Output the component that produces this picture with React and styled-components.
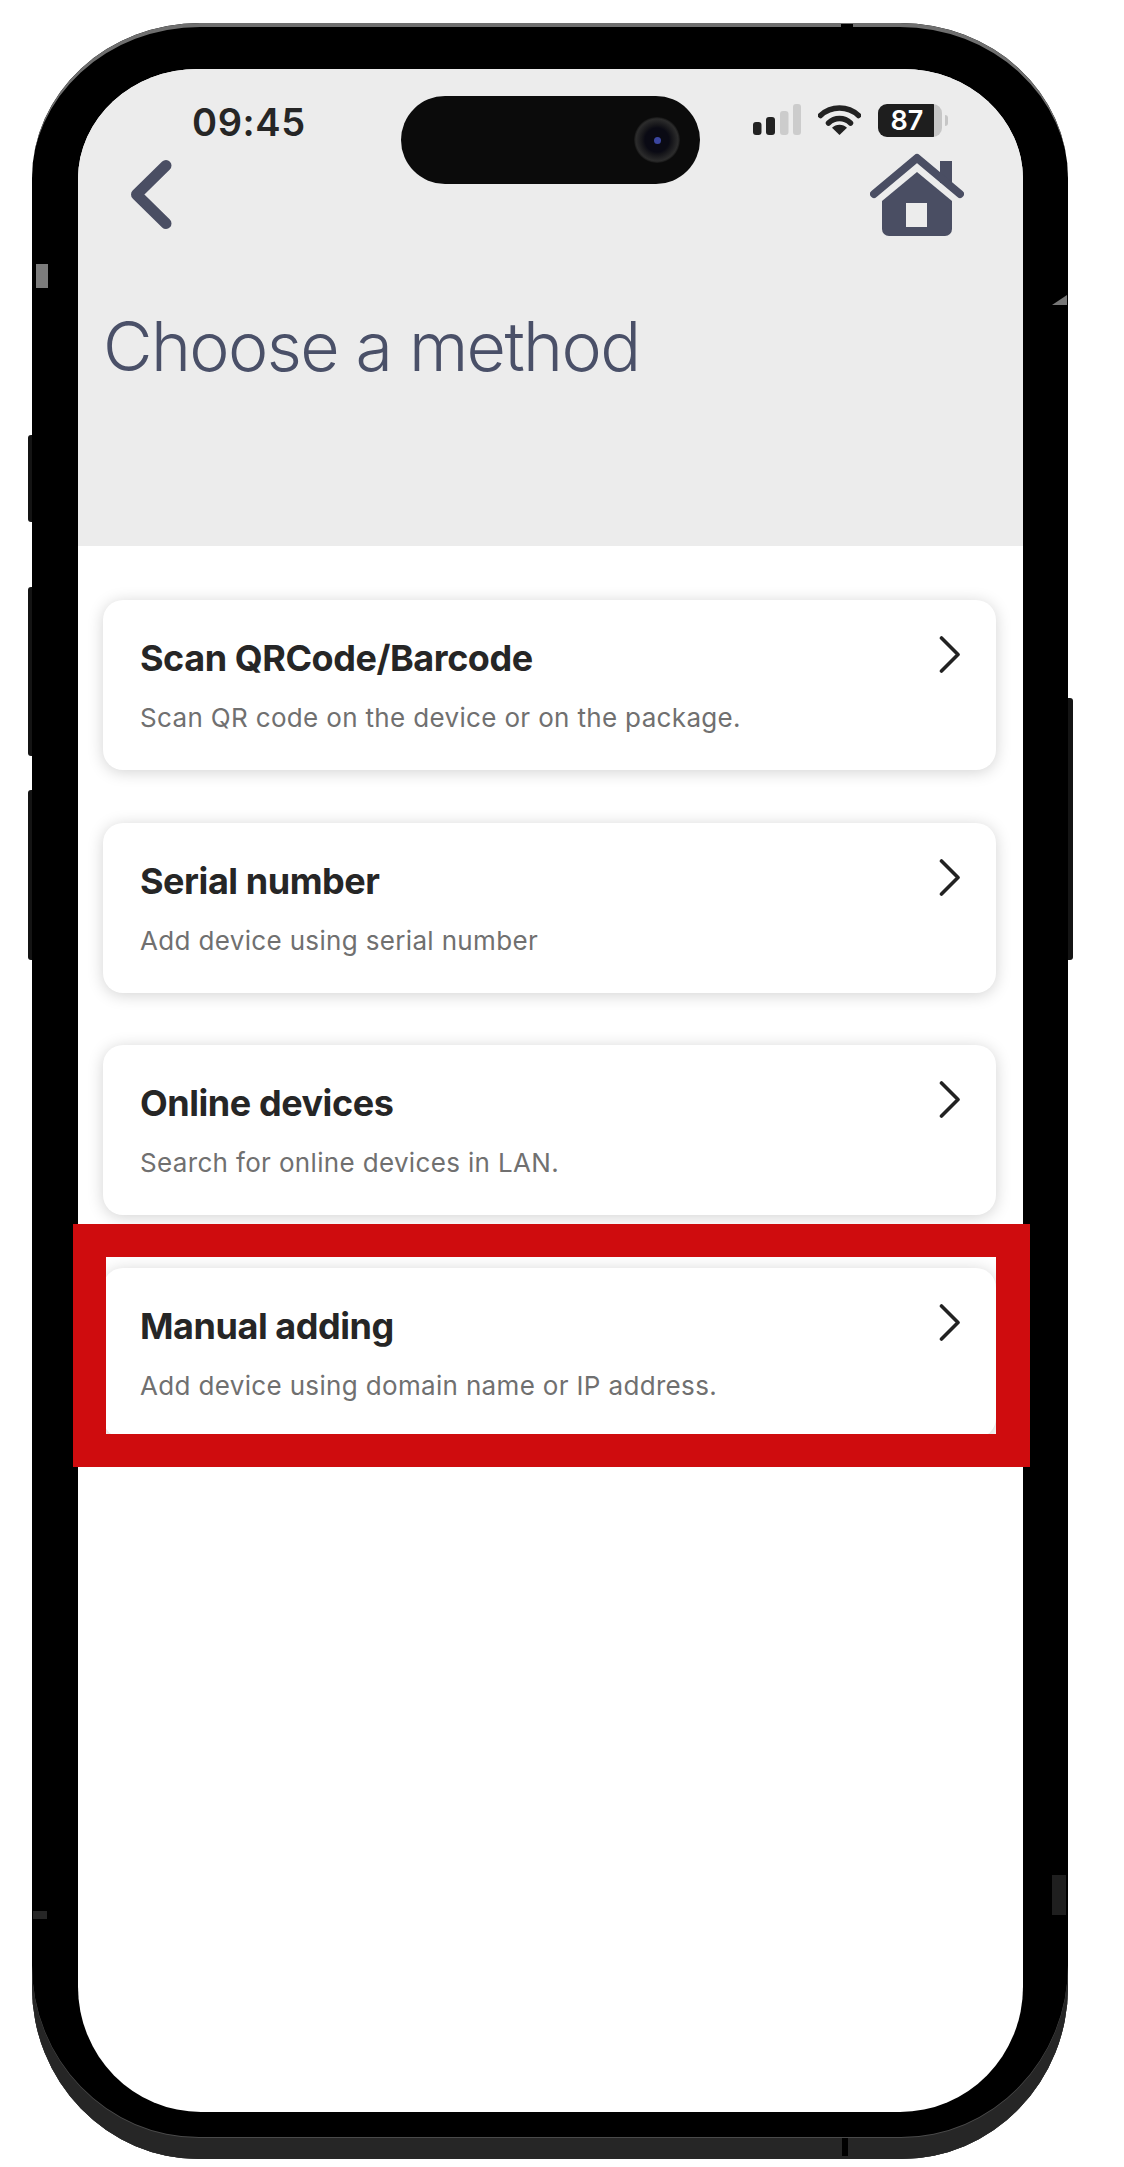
import React from 'react';
import styled, { createGlobalStyle } from 'styled-components';

const GlobalStyle = createGlobalStyle`
  html, body {
    margin: 0;
    background: #fff;
  }
  * {
    box-sizing: border-box;
  }
`;

const Page = styled.div`
  display: flex;
  align-items: flex-start;
  width: 1124px;
  height: 2167px;
  padding: 23px 0 0 28px;
  overflow: hidden;
  background: #fff;
  font-family: Inter, "Liberation Sans", sans-serif;
`;

const Rail = styled.div`
  display: flex;
  flex-direction: column;
  flex: none;
  width: ${(p) => p.$width}px;
  padding-top: ${(p) => p.$top}px;
`;

const SideButton = styled.div`
  height: ${(p) => p.$height}px;
  margin-top: ${(p) => p.$gap || 0}px;
  background: #141414;
  border-radius: ${(p) => (p.$right ? '0 3px 3px 0' : '3px 0 0 3px')};
`;

const Phone = styled.div`
  position: relative;
  flex: none;
  width: 1036px;
  height: 2136px;
  padding: 46px 45px 47px 46px;
  background: #000;
  border-radius: 168px 168px 167px 167px / 155px 155px 172px 172px;
  box-shadow: inset 0 5px 0 -1px #6f6f6f, inset 0 -21px 0 #262626, inset 0 -22px 0 #4a4a4a;
`;

const Band = styled.div`
  position: absolute;
  left: ${(p) => p.$x}px;
  top: ${(p) => p.$y}px;
  width: ${(p) => p.$w}px;
  height: ${(p) => p.$h}px;
  background: ${(p) => p.$color};
  clip-path: ${(p) => p.$clip || 'none'};
`;

const Screen = styled.div`
  width: 945px;
  height: 2043px;
  overflow: hidden;
  background: #fff;
  border-radius: 120px 120px 123px 123px / 110px 110px 125px 125px;
`;

const Header = styled.header`
  position: relative;
  height: 477px;
  background: #ececec;
`;

const StatusBar = styled.div`
  display: flex;
  align-items: flex-start;
  justify-content: space-between;
  height: 84px;
  padding: 33px 81px 0 114px;
`;

const Time = styled.span`
  font-size: 38px;
  font-weight: 600;
  line-height: 40px;
  letter-spacing: 0.6px;
  color: #262626;
`;

const Island = styled.div`
  position: absolute;
  left: 323px;
  top: 27px;
  display: flex;
  align-items: center;
  justify-content: flex-end;
  width: 299px;
  height: 88px;
  padding-right: 20px;
  background: #0b0b0b;
  border-radius: 44px;
`;

const Camera = styled.div`
  display: flex;
  align-items: center;
  justify-content: center;
  width: 46px;
  height: 46px;
  background: radial-gradient(circle, #0a0a14 0 12px, #16161a 15px, #2c2c2c 21px, #141414 23px);
  border-radius: 50%;
  &::after {
    content: '';
    width: 7px;
    height: 7px;
    background: #3b46a0;
    border-radius: 50%;
  }
`;

const StatusIcons = styled.div`
  display: flex;
  align-items: flex-start;
  gap: 17px;
  margin-top: 2px;
`;

const Battery = styled.div`
  position: relative;
  display: flex;
  align-items: center;
  justify-content: center;
  width: 64px;
  height: 33px;
  padding-right: 6px;
  font-size: 27px;
  font-weight: 600;
  color: #fff;
  background: linear-gradient(90deg, #1e1e1e ${(p) => p.$level}%, #c6c6c6 ${(p) => p.$level}%);
  border-radius: 9px;
  &::after {
    content: '';
    position: absolute;
    right: -6px;
    top: 11px;
    width: 3px;
    height: 11px;
    background: #c6c6c6;
    border-radius: 0 3px 3px 0;
  }
`;

const NavRow = styled.div`
  display: flex;
  align-items: flex-start;
  justify-content: space-between;
  height: 83px;
  padding: 0 59px 0 53px;
`;

const BackIcon = styled.svg`
  width: 41px;
  height: 69px;
  margin-top: 7px;
`;

const HomeIcon = styled.svg`
  width: 94px;
  height: 83px;
`;

const Title = styled.h1`
  margin: 69px 0 0 25px;
  font-size: 68px;
  font-weight: 300;
  line-height: 82px;
  letter-spacing: -1.6px;
  color: #4a5068;
`;

const CardList = styled.div`
  display: flex;
  flex-direction: column;
  gap: 52.6px;
  padding: 54px 27px 0 25px;
`;

const Card = styled.div`
  display: flex;
  align-items: flex-start;
  justify-content: space-between;
  height: 170px;
  padding: 36px 35px 0 37px;
  background: #fff;
  border-radius: 20px;
  box-shadow: 0 2px 16px rgba(0, 0, 0, 0.18);
`;

const CardText = styled.div`
  display: flex;
  flex-direction: column;
  gap: 22px;
`;

const CardTitle = styled.div`
  font-size: 36px;
  font-weight: 700;
  line-height: 44px;
  letter-spacing: -0.45px;
  color: #262626;
`;

const CardDesc = styled.div`
  font-size: 26px;
  font-weight: 400;
  line-height: 32px;
  letter-spacing: 0.34px;
  color: #707070;
`;

const Chevron = styled.svg`
  flex: none;
  width: 22px;
  height: 37px;
`;

const Highlight = styled.div`
  position: absolute;
  left: 41px;
  top: 1201px;
  width: 957px;
  height: 243px;
  border: 33px solid #cf0c0e;
  border-right-width: 34px;
`;

const methods = [
  { title: 'Scan QRCode/Barcode', desc: 'Scan QR code on the device or on the package.' },
  { title: 'Serial number', desc: 'Add device using serial number' },
  { title: 'Online devices', desc: 'Search for online devices in LAN.' },
  { title: 'Manual adding', desc: 'Add device using domain name or IP address.' },
];

const SignalIcon = () => (
  <svg width="48" height="31" viewBox="0 0 48 31">
    <rect x="0" y="18" width="8.5" height="13" rx="3" fill="#222" />
    <rect x="13" y="13" width="9" height="18" rx="3" fill="#222" />
    <rect x="27" y="7" width="8.5" height="24" rx="3" fill="#ccc" />
    <rect x="40" y="0" width="8" height="31" rx="3" fill="#ccc" />
  </svg>
);

const WifiIcon = () => (
  <svg width="43" height="31" viewBox="0 0 43 31">
    <path d="M2.5 11.5A28 28 0 0 1 40.5 11.5" fill="none" stroke="#222" strokeWidth="5.5" strokeLinecap="round" />
    <path d="M10.5 19A16 16 0 0 1 32.5 19" fill="none" stroke="#222" strokeWidth="5.5" strokeLinecap="round" />
    <path d="M21.5 31L14 23.8A10.5 10.5 0 0 1 29 23.8Z" fill="#222" />
  </svg>
);

export default function App() {
  return (
    <Page>
      <GlobalStyle />
      <Rail $width={4} $top={412}>
        <SideButton $height={87} />
        <SideButton $height={169} $gap={65} />
        <SideButton $height={170} $gap={34} />
      </Rail>
      <Phone>
        <Band $x={4} $y={241} $w={12} $h={24} $color="#7c7c7c" />
        <Band $x={809} $y={1} $w={12} $h={15} $color="#000" />
        <Band $x={810} $y={2115} $w={6} $h={18} $color="#000" />
        <Band $x={1020} $y={272} $w={15} $h={10} $color="#777" $clip="polygon(100% 0, 100% 100%, 0 100%)" />
        <Band $x={1} $y={1888} $w={14} $h={8} $color="#262626" />
        <Band $x={1020} $y={1852} $w={14} $h={40} $color="#1f1f1f" />
        <Screen>
          <Header>
            <StatusBar>
              <Time>09:45</Time>
              <StatusIcons>
                <SignalIcon />
                <WifiIcon />
                <Battery $level={88}>87</Battery>
              </StatusIcons>
            </StatusBar>
            <Island>
              <Camera />
            </Island>
            <NavRow>
              <BackIcon viewBox="0 0 41 69">
                <polyline points="35,5.5 5.5,34.5 35,63.5" fill="none" stroke="#4a4e63" strokeWidth="11" strokeLinecap="round" strokeLinejoin="round" />
              </BackIcon>
              <HomeIcon viewBox="0 0 94 83">
                <rect x="70" y="8" width="12" height="22" fill="#4a4e63" />
                <polyline points="4,41 47,5 90,41" fill="none" stroke="#4a4e63" strokeWidth="8" strokeLinecap="round" strokeLinejoin="round" />
                <path d="M12 48L47 19L82 48V76a7 7 0 0 1-7 7H19a7 7 0 0 1-7-7Z" fill="#4a4e63" />
                <rect x="36" y="50" width="21" height="24" fill="#ececec" />
              </HomeIcon>
            </NavRow>
            <Title>Choose a method</Title>
          </Header>
          <CardList>
            {methods.map((m) => (
              <Card key={m.title}>
                <CardText>
                  <CardTitle>{m.title}</CardTitle>
                  <CardDesc>{m.desc}</CardDesc>
                </CardText>
                <Chevron viewBox="0 0 22 37">
                  <polyline points="2.5,2 19,18.5 2.5,35" fill="none" stroke="#222" strokeWidth="3.6" strokeLinecap="round" strokeLinejoin="round" />
                </Chevron>
              </Card>
            ))}
          </CardList>
        </Screen>
        <Highlight />
      </Phone>
      <Rail $width={5} $top={675}>
        <SideButton $height={262} $right />
      </Rail>
    </Page>
  );
}
